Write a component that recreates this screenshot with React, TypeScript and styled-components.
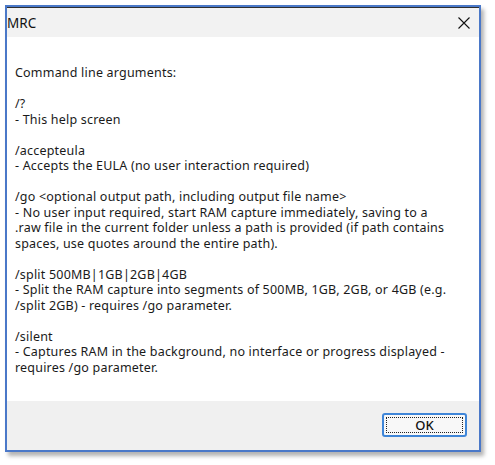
import React from "react";
import styled, { createGlobalStyle } from "styled-components";

const Global = createGlobalStyle`
  html, body { margin: 0; padding: 0; background: #ffffff; }
  body { font-family: "Noto Sans", "Open Sans", sans-serif; }
`;

const Page = styled.div`
  width: 495px;
  height: 465px;
  padding: 5px 0 0 5px;
  box-sizing: border-box;
  background: #ffffff;
`;

const Frame = styled.div`
  width: 476px;
  height: 447px;
  box-sizing: border-box;
  border: 2px solid #4a78c8;
  box-shadow: 3px 4px 4px rgba(0, 0, 0, 0.3);
  display: flex;
  flex-direction: column;
  background: #ffffff;
`;

const TitleBar = styled.div`
  height: 30px;
  box-sizing: border-box;
  border-top: 1px solid #2e2e2e;
  background: #f2f2f2;
  display: flex;
  align-items: center;
  justify-content: space-between;
  padding: 0 5px 0 0;
`;

const Title = styled.span`
  font-family: "Noto Sans", sans-serif;
  font-size: 13.5px;
  color: #111;
  letter-spacing: 0.1px;
`;

const CloseButton = styled.div`
  width: 20px;
  height: 20px;
  display: flex;
  align-items: center;
  justify-content: center;
`;

const Content = styled.div`
  flex: 1;
  padding: 28px 0 0 8px;
  font-size: 12.5px;
  line-height: 15.5px;
  color: #1a1a1a;
  letter-spacing: 0.2px;
`;

const Line = styled.div`
  white-space: pre;
  height: 15.5px;
`;

const Footer = styled.div`
  height: 49px;
  background: #f0f0f0;
  display: flex;
  justify-content: flex-end;
  align-items: flex-start;
  padding: 12px 12px 0 0;
  box-sizing: border-box;
`;

const OkButton = styled.button`
  width: 85px;
  height: 24px;
  box-sizing: border-box;
  border: 2px solid #3f86d8;
  border-radius: 3px;
  background: #f8f8f8;
  padding: 2px;
  font-family: "Noto Sans", sans-serif;
  font-size: 13px;
  color: #111;
  display: flex;
`;

const Focus = styled.span`
  flex: 1;
  border: 1px dotted #222;
  display: flex;
  align-items: center;
  justify-content: center;
  font-weight: 500;
`;

const lines = [
  "Command line arguments:",
  "",
  "/?",
  "- This help screen",
  "",
  "/accepteula",
  "- Accepts the EULA (no user interaction required)",
  "",
  "/go <optional output path, including output file name>",
  "- No user input required, start RAM capture immediately, saving to a",
  ".raw file in the current folder unless a path is provided (if path contains",
  "spaces, use quotes around the entire path).",
  "",
  "/split 500MB|1GB|2GB|4GB",
  "- Split the RAM capture into segments of 500MB, 1GB, 2GB, or 4GB (e.g.",
  "/split 2GB) - requires /go parameter.",
  "",
  "/silent",
  "- Captures RAM in the background, no interface or progress displayed -",
  "requires /go parameter.",
];

export default function App() {
  return (
    <>
      <Global />
      <Page>
        <Frame>
          <TitleBar>
            <Title>MRC</Title>
            <CloseButton>
              <svg width="12" height="12" viewBox="0 0 12 12">
                <path d="M0.5 0.5 L11.5 11.5 M11.5 0.5 L0.5 11.5" stroke="#111" strokeWidth="1.1" fill="none" />
              </svg>
            </CloseButton>
          </TitleBar>
          <Content>
            {lines.map((l, i) => (
              <Line key={i}>{l}</Line>
            ))}
          </Content>
          <Footer>
            <OkButton>
              <Focus>OK</Focus>
            </OkButton>
          </Footer>
        </Frame>
      </Page>
    </>
  );
}
